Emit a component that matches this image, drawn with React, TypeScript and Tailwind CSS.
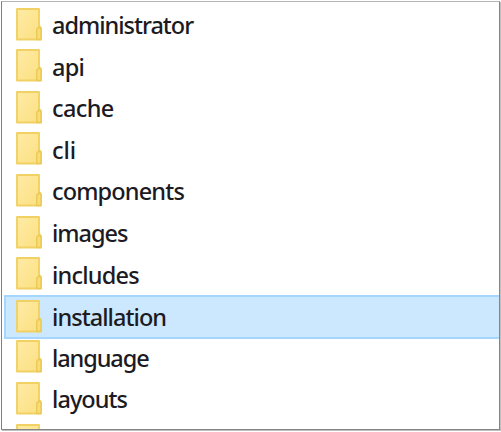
type Folder = { name: string; tracking: string; selected?: boolean };

const folders: Folder[] = [
  { name: 'administrator', tracking: 'tracking-[-1.02px]' },
  { name: 'api', tracking: 'tracking-[-0.8px]' },
  { name: 'cache', tracking: 'tracking-[-0.6px]' },
  { name: 'cli', tracking: 'tracking-[-0.1px]' },
  { name: 'components', tracking: 'tracking-[-0.85px]' },
  { name: 'images', tracking: 'tracking-[-1px]' },
  { name: 'includes', tracking: 'tracking-[-0.8px]' },
  { name: 'installation', tracking: 'tracking-[-0.95px]', selected: true },
  { name: 'language', tracking: 'tracking-[-1.1px]' },
  { name: 'layouts', tracking: 'tracking-[-0.95px]' },
  { name: '', tracking: 'tracking-normal' },
];

function FolderIcon() {
  return (
    <svg className="-mt-[1.6px] h-[33px] w-[27px] shrink-0" viewBox="0 0 27 33" aria-hidden="true">
      <defs>
        <linearGradient id="folder" x1="0" y1="0" x2="1" y2="1">
          <stop offset="0" stopColor="#ffeba5" />
          <stop offset="1" stopColor="#fbdf80" />
        </linearGradient>
      </defs>
      <path d="M1 1H23V18L25 20V31.5H1Z" fill="url(#folder)" stroke="#f1d163" strokeWidth="1.9" strokeLinejoin="round" />
      <path d="M20.7 31.5V21.5L23 18.7L25 21V31.5Z" fill="#f8dc76" stroke="#ebc956" strokeWidth="1.4" strokeLinejoin="round" />
    </svg>
  );
}

export default function App() {
  return (
    <div className="h-[432px] w-[501px] overflow-hidden bg-white pt-px pl-px">
      <main className="h-[429px] w-[499px] overflow-hidden border border-t-[#b5b5b5] border-r-[#858585] border-b-[#858585] border-l-[#7f7f7f] bg-white pt-[2.2px] pl-[2px] shadow-[1px_1px_0_#c0c0c0]">
        <ul>
          {folders.map(({ name, tracking, selected }, i) => (
            <li
              key={i}
              className={`flex items-center border-l-2 ${selected ? '-mt-[0.5px] -mb-[1.9px] h-[44px] border-y-2 border-[#a5d6ff] bg-[#cce8ff]' : 'h-[41.6px] border-transparent'}`}
            >
              <div className="flex items-center gap-[9px] pl-[10px]">
                <FolderIcon />
                <span className={`font-['Noto_Sans','Open_Sans',sans-serif] text-[23.5px] leading-[30px] font-medium text-[#1c1a22] ${tracking}`}>
                  {name}
                </span>
              </div>
            </li>
          ))}
        </ul>
      </main>
    </div>
  );
}
